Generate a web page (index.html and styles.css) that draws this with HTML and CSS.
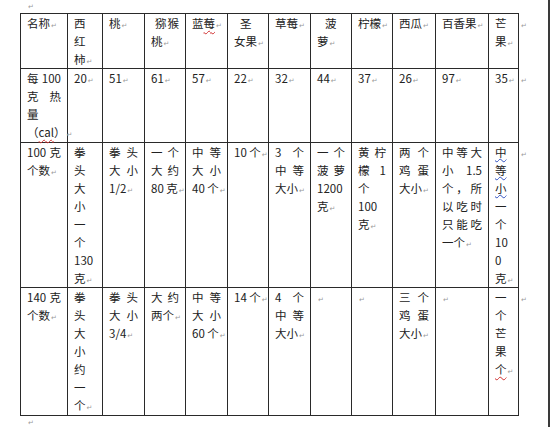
FILE: index.html
```html
<!DOCTYPE html>
<html lang="zh-CN">
<head>
<meta charset="utf-8">
<title>水果热量表</title>
<link rel="stylesheet" href="styles.css">
</head>
<body>
<div class="page">
  <div class="para top"><span class="pm">↵</span></div>
  <table class="fruit">
    <colgroup>
      <col class="c1"><col class="c2"><col class="c3"><col class="c4"><col class="c5"><col class="c6">
      <col class="c7"><col class="c8"><col class="c9"><col class="c10"><col class="c11"><col class="c12"><col class="ce">
    </colgroup>
    <tr class="r1">
      <td><span class="l">名称<span class="pm">↵</span></span></td>
      <td><span class="l">西</span><span class="l">红</span><span class="l">柿<span class="pm">↵</span></span></td>
      <td><span class="l">桃<span class="pm">↵</span></span></td>
      <td><span class="l j ind4">猕猴</span><span class="l">桃<span class="pm">↵</span></span></td>
      <td><span class="l">蓝<span class="err">莓</span><span class="pm">↵</span></span></td>
      <td><span class="l ind6">圣</span><span class="l">女果<span class="pm">↵</span></span></td>
      <td><span class="l">草莓<span class="pm">↵</span></span></td>
      <td><span class="l ind8">菠</span><span class="l">萝<span class="pm">↵</span></span></td>
      <td><span class="l">柠檬<span class="pm">↵</span></span></td>
      <td><span class="l">西瓜<span class="pm">↵</span></span></td>
      <td><span class="l">百香果<span class="pm">↵</span></span></td>
      <td><span class="l">芒</span><span class="l">果<span class="pm">↵</span></span></td>
      <td class="eor"><span class="pm">↵</span></td>
    </tr>
    <tr class="r2">
      <td><span class="l j">每 100</span><span class="l j">克 热</span><span class="l">量</span><span class="l">（<span class="err">cal</span>）<span class="pm">↵</span></span></td>
      <td><span class="l">20<span class="pm">↵</span></span></td>
      <td><span class="l">51<span class="pm">↵</span></span></td>
      <td><span class="l">61<span class="pm">↵</span></span></td>
      <td><span class="l">57<span class="pm">↵</span></span></td>
      <td><span class="l">22<span class="pm">↵</span></span></td>
      <td><span class="l">32<span class="pm">↵</span></span></td>
      <td><span class="l">44<span class="pm">↵</span></span></td>
      <td><span class="l">37<span class="pm">↵</span></span></td>
      <td><span class="l">26<span class="pm">↵</span></span></td>
      <td><span class="l">97<span class="pm">↵</span></span></td>
      <td><span class="l">35<span class="pm">↵</span></span></td>
      <td class="eor"><span class="pm">↵</span></td>
    </tr>
    <tr class="r3">
      <td><span class="l j">100 克</span><span class="l">个数<span class="pm">↵</span></span></td>
      <td><span class="l">拳</span><span class="l">头</span><span class="l">大</span><span class="l">小</span><span class="l">一</span><span class="l">个</span><span class="l">130</span><span class="l">克<span class="pm">↵</span></span></td>
      <td><span class="l j">拳头</span><span class="l j">大小</span><span class="l">1/2<span class="pm">↵</span></span></td>
      <td><span class="l j">一个</span><span class="l j">大约</span><span class="l">80 克<span class="pm">↵</span></span></td>
      <td><span class="l j">中等</span><span class="l j">大小</span><span class="l">40 个<span class="pm">↵</span></span></td>
      <td><span class="l">10 个<span class="pm">↵</span></span></td>
      <td><span class="l j">3 个</span><span class="l j">中等</span><span class="l">大小<span class="pm">↵</span></span></td>
      <td><span class="l j">一个</span><span class="l j">菠萝</span><span class="l">1200</span><span class="l">克<span class="pm">↵</span></span></td>
      <td><span class="l j">黄柠</span><span class="l j">檬 1</span><span class="l">个</span><span class="l">100</span><span class="l">克<span class="pm">↵</span></span></td>
      <td><span class="l j">两个</span><span class="l j">鸡蛋</span><span class="l">大小<span class="pm">↵</span></span></td>
      <td><span class="l j">中等大</span><span class="l j">小 1.5</span><span class="l j">个，所</span><span class="l j">以吃时</span><span class="l j">只能吃</span><span class="l">一个<span class="pm">↵</span></span></td>
      <td><span class="l"><span class="gram">中</span></span><span class="l"><span class="gram">等</span></span><span class="l"><span class="gram">小</span></span><span class="l">一</span><span class="l">个</span><span class="l">10</span><span class="l">0</span><span class="l">克<span class="pm">↵</span></span></td>
      <td class="eor"><span class="pm">↵</span></td>
    </tr>
    <tr class="r4">
      <td><span class="l j">140 克</span><span class="l">个数<span class="pm">↵</span></span></td>
      <td><span class="l">拳</span><span class="l">头</span><span class="l">大</span><span class="l">小</span><span class="l">约</span><span class="l">一</span><span class="l">个<span class="pm">↵</span></span></td>
      <td><span class="l j">拳头</span><span class="l j">大小</span><span class="l">3/4<span class="pm">↵</span></span></td>
      <td><span class="l j">大约</span><span class="l">两个<span class="pm">↵</span></span></td>
      <td><span class="l j">中等</span><span class="l j">大小</span><span class="l">60 个<span class="pm">↵</span></span></td>
      <td><span class="l">14 个<span class="pm">↵</span></span></td>
      <td><span class="l j">4 个</span><span class="l j">中等</span><span class="l">大小<span class="pm">↵</span></span></td>
      <td><span class="l"><span class="pm">↵</span></span></td>
      <td><span class="l"><span class="pm">↵</span></span></td>
      <td><span class="l j">三个</span><span class="l j">鸡蛋</span><span class="l">大小<span class="pm">↵</span></span></td>
      <td><span class="l"><span class="pm">↵</span></span></td>
      <td><span class="l">一</span><span class="l">个</span><span class="l">芒</span><span class="l">果</span><span class="l"><span class="err">个</span><span class="pm">↵</span></span></td>
      <td class="eor"><span class="pm">↵</span></td>
    </tr>
  </table>
  <div class="para bottom"><span class="pm">↵</span></div>
</div>
</body>
</html>
```

FILE: styles.css
```css
html, body {
  margin: 0;
  padding: 0;
  background: #ffffff;
}

.page {
  width: 550px;
  height: 427px;
  box-sizing: border-box;
  padding-left: 20px;
  border-right: 2px solid #3a3a3a;
  overflow: hidden;
  font-family: "Noto Sans CJK SC", "Noto Sans", sans-serif;
  font-size: 11.5px;
  color: #222222;
}

.para {
  padding-left: 7px;
  height: 9px;
  line-height: 9px;
}

.top {
  height: 13px;
}

.bottom {
  padding-top: 0;
}

.pm {
  font-family: "DejaVu Sans", sans-serif;
  font-size: 7px;
  line-height: 0;
  color: #9a9a9a;
  margin-left: 1px;
}

.fruit {
  border-collapse: collapse;
  table-layout: fixed;
  width: 518px;
}

.c1 { width: 47px; }
.c2 { width: 35px; }
.c3 { width: 42px; }
.c4 { width: 41px; }
.c5 { width: 42px; }
.c6 { width: 41px; }
.c7 { width: 42px; }
.c8 { width: 41px; }
.c9 { width: 41px; }
.c10 { width: 43px; }
.c11 { width: 53px; }
.c12 { width: 30px; }
.ce { width: 20px; }

.fruit td {
  border: 1px solid #2a2a2a;
  padding: 0 6px;
  vertical-align: top;
  line-height: 18px;
}

.fruit td.eor {
  border: none;
  padding: 0 0 0 1px;
}

.r1 { height: 55px; }
.r2 { height: 74px; }
.r3 { height: 145px; }
.r4 { height: 128px; }

.l {
  display: block;
  white-space: nowrap;
  height: 18px;
}

.j {
  text-align: justify;
  text-align-last: justify;
}

.ind4 { padding-left: 4px; }
.ind6 { padding-left: 6px; }
.ind8 { padding-left: 8px; }

.err {
  text-decoration: underline wavy #d03030;
  text-decoration-thickness: 1px;
  text-underline-offset: 2px;
}

.gram {
  text-decoration: underline wavy #3050c0;
  text-decoration-thickness: 1px;
  text-underline-offset: 1px;
}
```
